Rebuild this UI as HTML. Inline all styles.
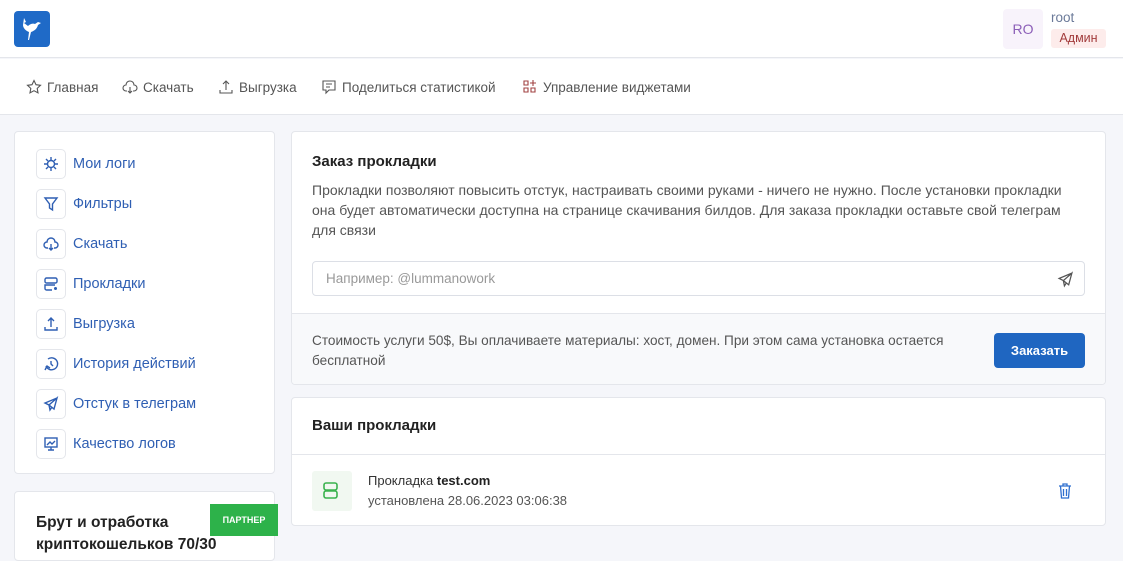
<!DOCTYPE html>
<html><head><meta charset="utf-8"><style>
*{box-sizing:border-box;margin:0;padding:0}
body{width:1123px;height:546px;overflow:hidden;background:#f5f6fa;font-family:"Liberation Sans",sans-serif;color:#333;position:relative}
.abs{position:absolute}
.hdr{left:0;top:0;width:1123px;height:58px;background:#fff;border-bottom:1px solid #e4e6eb}
.nav{left:0;top:59px;width:1123px;height:56px;background:#fff;border-bottom:1px solid #e4e6eb}
.nav span{position:absolute;top:20px;font-size:13.5px;color:#555;display:flex;align-items:center;gap:5px}
.card{background:#fff;border:1px solid #e4e6eb;border-radius:4px}
.item{position:absolute;left:21px;height:30px;display:flex;align-items:center}
.ib{width:30px;height:30px;border:1px solid #e4e6eb;border-radius:5px;display:flex;align-items:center;justify-content:center;margin-right:7px}
.item b{font-weight:normal;font-size:14.5px;color:#2f5fb3}
p{font-size:13px;color:#555;line-height:20px}
</style></head><body>
<div class="abs hdr">
 <div class="abs" style="left:14px;top:11px;width:36px;height:36px;background:#1f6ac7;border-radius:4px">
  <svg width="36" height="36" viewBox="0 0 36 36"><path d="M10 7l2 4-2 1 4 3c2-2 5-3 7-2l3-2 3 1-3 2c-1 4-4 6-7 7l-2 8-1 0 1-8c-3-1-6-4-6-7z" fill="#fff"/></svg>
 </div>
 <div class="abs" style="left:1003px;top:9px;width:40px;height:40px;background:#f8f3fb;border-radius:4px;color:#8c5fb8;font-size:14px;text-align:center;line-height:40px">RO</div>
 <div class="abs" style="left:1051px;top:10px;font-size:13.5px;color:#6b7a99">root</div>
 <div class="abs" style="left:1051px;top:29px;width:55px;height:19px;background:#fdeceb;border-radius:3px;color:#a23b3b;font-size:12.5px;text-align:center;line-height:19px">Админ</div>
</div>
<div class="abs nav">
 <span style="left:26px"><svg width="16" height="16" viewBox="0 0 16 16"><path d="M8 1.5l2 4.2 4.5.6-3.3 3.1.8 4.5L8 11.7 4 13.9l.8-4.5L1.5 6.3 6 5.7z" fill="none" stroke="#555" stroke-width="1.1"/></svg>Главная</span>
 <span style="left:122px"><svg width="16" height="16" viewBox="0 0 16 16"><path d="M5 12H4a3 3 0 010-6 4 4 0 018 0 3 3 0 010 6h-1M8 8v6M6 12l2 2 2-2" fill="none" stroke="#555" stroke-width="1.1"/></svg>Скачать</span>
 <span style="left:218px"><svg width="16" height="16" viewBox="0 0 16 16"><path d="M8 11V2M5 5l3-3 3 3M2 11v3h12v-3" fill="none" stroke="#555" stroke-width="1.1"/></svg>Выгрузка</span>
 <span style="left:321px"><svg width="16" height="16" viewBox="0 0 16 16"><path d="M2 2h12v9H8l-3 3v-3H2zM5 5h6M5 8h4" fill="none" stroke="#555" stroke-width="1.1"/></svg>Поделиться статистикой</span>
 <span style="left:522px"><svg width="16" height="16" viewBox="0 0 16 16"><path d="M2 2h4v4H2zM2 9h4v4H2zM9 9h4v4H9zM11 1v6M8 4h6" fill="none" stroke="#a04040" stroke-width="1.1"/></svg>Управление виджетами</span>
</div>
<div class="abs card" style="left:14px;top:131px;width:261px;height:343px">
 <div class="item" style="top:17px"><div class="ib"><svg width="16" height="16" viewBox="0 0 16 16"><circle cx="8" cy="8" r="3.5" fill="none" stroke="#2f5fb3" stroke-width="1.4"/><path d="M8 1v3M8 12v3M1 8h3M12 8h3M3 3l2 2M11 11l2 2M13 3l-2 2M3 13l2-2" stroke="#2f5fb3" stroke-width="1.4"/></svg></div><b>Мои логи</b></div>
 <div class="item" style="top:57px"><div class="ib"><svg width="16" height="16" viewBox="0 0 16 16"><path d="M2 2h12l-4.5 6v6l-3-2V8z" fill="none" stroke="#2f5fb3" stroke-width="1.4"/></svg></div><b>Фильтры</b></div>
 <div class="item" style="top:97px"><div class="ib"><svg width="16" height="16" viewBox="0 0 16 16"><path d="M5 12H4a3 3 0 010-6 4 4 0 018 0 3 3 0 010 6h-1M8 8v6M6 12l2 2 2-2" fill="none" stroke="#2f5fb3" stroke-width="1.4"/></svg></div><b>Скачать</b></div>
 <div class="item" style="top:137px"><div class="ib"><svg width="16" height="16" viewBox="0 0 16 16"><rect x="2" y="2" width="12" height="5" rx="1.5" fill="none" stroke="#2f5fb3" stroke-width="1.4"/><path d="M9 14H3.5A1.5 1.5 0 012 12.5V9h10" fill="none" stroke="#2f5fb3" stroke-width="1.4"/><circle cx="12.5" cy="12.5" r="1.5" fill="#2f5fb3"/></svg></div><b>Прокладки</b></div>
 <div class="item" style="top:177px"><div class="ib"><svg width="16" height="16" viewBox="0 0 16 16"><path d="M8 11V2M5 5l3-3 3 3M2 11v3h12v-3" fill="none" stroke="#2f5fb3" stroke-width="1.4"/></svg></div><b>Выгрузка</b></div>
 <div class="item" style="top:217px"><div class="ib"><svg width="16" height="16" viewBox="0 0 16 16"><path d="M3 10a6 6 0 102-7M8 5v3l2 2M2 14l2-4 3 2" fill="none" stroke="#2f5fb3" stroke-width="1.4"/></svg></div><b>История действий</b></div>
 <div class="item" style="top:257px"><div class="ib"><svg width="16" height="16" viewBox="0 0 16 16"><path d="M14 2L2 7l4 2 1 5 2-3M14 2l-3 11-5-4z" fill="none" stroke="#2f5fb3" stroke-width="1.4"/></svg></div><b>Отстук в телеграм</b></div>
 <div class="item" style="top:297px"><div class="ib"><svg width="16" height="16" viewBox="0 0 16 16"><rect x="2" y="2" width="12" height="9" fill="none" stroke="#2f5fb3" stroke-width="1.4"/><path d="M8 11v3M5 14h6M4 9l3-3 2 2 3-3" fill="none" stroke="#2f5fb3" stroke-width="1.4"/></svg></div><b>Качество логов</b></div>
</div>
<div class="abs card" style="left:14px;top:491px;width:261px;height:70px">
 <div class="abs" style="left:21px;top:20px;font-size:15.5px;color:#222;line-height:22px;font-weight:600">Брут и отработка<br>криптокошельков 70/30</div>
</div>
<div class="abs" style="left:210px;top:504px;width:68px;height:32px;background:#2db24a;color:#fff;font-size:9px;font-weight:bold;text-align:center;line-height:32px">ПАРТНЕР</div>
<div class="abs card" style="left:291px;top:131px;width:815px;height:254px;overflow:hidden">
 <div class="abs" style="left:20px;top:21px;font-size:15px;font-weight:600;color:#222">Заказ прокладки</div>
 <p class="abs" style="left:20px;top:48px;width:768px;font-size:14px">Прокладки позволяют повысить отстук, настраивать своими руками - ничего не нужно. После установки прокладки она будет автоматически доступна на странице скачивания билдов. Для заказа прокладки оставьте свой телеграм для связи</p>
 <div class="abs" style="left:20px;top:129px;width:773px;height:35px;border:1px solid #dcdfe6;border-radius:4px;font-size:13.5px;color:#999;padding-left:13px;line-height:33px">Например: @lummanowork
  <svg class="abs" style="right:10px;top:9px" width="17" height="17" viewBox="0 0 16 16"><path d="M14 2L2 7l4 2 1 5 2-3M14 2l-3 11-5-4z" fill="none" stroke="#555" stroke-width="1.2"/></svg></div>
 <div class="abs" style="left:0;top:181px;width:815px;height:73px;background:#f8f9fb;border-top:1px solid #e4e6eb">
  <p class="abs" style="left:20px;top:17px;width:660px;font-size:13.6px">Стоимость услуги 50$, Вы оплачиваете материалы: хост, домен. При этом сама установка остается бесплатной</p>
  <div class="abs" style="left:702px;top:19px;width:91px;height:35px;background:#1f66c1;border-radius:4px;color:#fff;font-size:13px;font-weight:bold;text-align:center;line-height:35px">Заказать</div>
 </div>
</div>
<div class="abs card" style="left:291px;top:397px;width:815px;height:129px">
 <div class="abs" style="left:20px;top:19px;font-size:15px;font-weight:600;color:#222">Ваши прокладки</div>
 <div class="abs" style="left:0;top:56px;width:813px;border-top:1px solid #e4e6eb"></div>
 <div class="abs" style="left:20px;top:73px;width:40px;height:40px;background:#f1f8f1;border-radius:3px"><svg style="margin:9px 8px" width="22" height="22" viewBox="0 0 22 22"><rect x="4" y="3" width="13" height="7" rx="2" fill="none" stroke="#3bb34f" stroke-width="1.6"/><rect x="4" y="11" width="13" height="7" rx="2" fill="none" stroke="#3bb34f" stroke-width="1.6"/></svg></div>
 <div class="abs" style="left:76px;top:75px;font-size:13px;color:#333">Прокладка <b style="font-weight:600;color:#222">test.com</b></div>
 <div class="abs" style="left:76px;top:95px;font-size:13px;color:#555">установлена 28.06.2023 03:06:38</div>
 <svg class="abs" style="left:765px;top:84px" width="16" height="18" viewBox="0 0 16 18"><path d="M2 4h12M6 4V2h4v2M3.5 4l1 12h7l1-12M6.5 7v7M9.5 7v7" fill="none" stroke="#2f6fcf" stroke-width="1.3"/></svg>
</div>
</body></html>
